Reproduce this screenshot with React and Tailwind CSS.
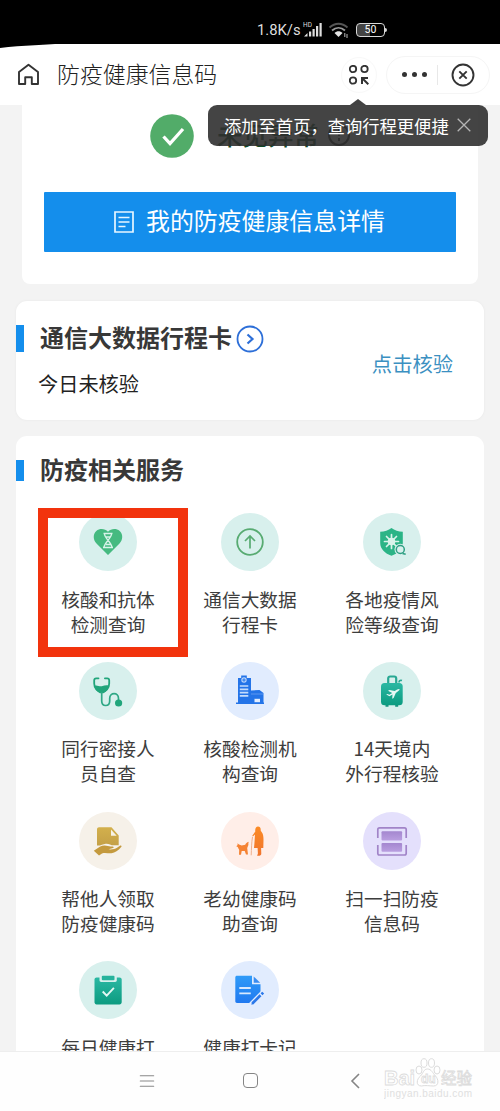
import { Menu } from "lucide-react";

function HeartIcon() {
  return (
    <>
      <path
        d="M29 42 17.500 30.500C14 27 13.800 21 17.300 18c3.400-2.900 8.700-2.600 11.700.8 3-3.400 8.300-3.700 11.700-.8 3.500 3 3.300 9-.2 12.500z"
        fill="#45ba80"
      />
      <path
        d="M24.500 20.500h9M25.500 21c0 4 6.500 8 7.500 13M32.500 21c0 4-6.500 8-7.500 13M24 34.500h10M27 24h4M27 31.500h5"
        stroke="#d9f3ea"
        strokeWidth="1.300"
        fill="none"
      />
    </>
  );
}

function ArrowUpIcon() {
  return (
    <g fill="none" stroke="#58ab72">
      <circle cx="29" cy="29" r="12.800" strokeWidth="1.800" />
      <path d="M29 35.500V23.500M24 28l5-5 5 5" strokeWidth="1.700" />
    </g>
  );
}

function ShieldIcon() {
  return (
    <>
      <path
        d="M28.500 15c3 2.500 7 3.500 11.300 3.700V30c0 6-5 10.500-11.300 12.800C22 40.500 17.200 36 17.200 30V18.700C21.500 18.500 25.500 17.500 28.500 15z"
        fill="#2bb486"
      />
      <circle cx="28.500" cy="28.500" r="3.800" fill="#d9f3ea" />
      <path
        d="M28.500 21.500v14M21.500 28.500h14M23.500 23.500l10 10M33.500 23.500l-10 10"
        stroke="#d9f3ea"
        strokeWidth="1.700"
        strokeLinecap="round"
      />
      <circle cx="37.300" cy="36.500" r="5.800" fill="#d8f0ed" />
      <circle cx="37.300" cy="36.500" r="4" fill="#d8f0ed" stroke="#2f9f83" strokeWidth="1.500" />
      <path d="m39.500 40.500 3.200.8" stroke="#2f9f83" strokeWidth="1.600" />
    </>
  );
}

function StethoscopeIcon() {
  return (
    <>
      <path
        d="M19.500 16.300h-2.300c-1.300 0-2 .8-2 2v3.200c0 4.500 3.200 8.500 7.500 8.500s7.500-4 7.500-8.500v-3.200c0-1.200-.7-2-2-2h-2.300"
        fill="none"
        stroke="#21a57b"
        strokeWidth="1.800"
        strokeLinecap="round"
      />
      <path d="M15.300 23.800c2.500-1.300 5 .9 7.500.4 2.500-.5 5-1.500 7.300-.4-.8 3.700-3.200 6.200-5.600 7.500h-3.600c-2.500-1.300-4.900-3.800-5.600-7.500z" fill="#21a57b" />
      <path
        d="M22.700 30v9c0 6 8 6 8 0v-2.500c0-6.500 8.800-6.500 8.800 0V40"
        fill="none"
        stroke="#2fa886"
        strokeWidth="1.700"
      />
      <circle cx="39.600" cy="41" r="3.600" fill="#21a57b" />
    </>
  );
}

function BuildingIcon() {
  return (
    <>
      <path
        d="M20.200 13.500h5.600V16H30v12.500l8.500-.5 4 3v9.500h.5V42H15v-1.500h2V16h3.200z"
        fill="#2474e8"
      />
      <circle cx="23" cy="18" r="2.700" fill="#b9d4fb" />
      <path d="M23 16.300v3.400M21.300 18h3.400" stroke="#2474e8" strokeWidth="1" />
      <path d="M18.800 24h8.500M18.800 27.300h8.500M18.800 30.600h8.500M18.800 33.900h8.500" stroke="#c5dcfc" strokeWidth="1.700" />
      <path d="M30 32h12" stroke="#75a8f2" strokeWidth=".7" />
      <path d="M33.500 36.800h5.500v3.400h-5.500z" fill="#e2edff" />
    </>
  );
}

function SuitcaseIcon() {
  return (
    <>
      <path d="M25.200 22v-5.500c0-1.200.8-2 2-2h4c1.200 0 2 .8 2 2V22" fill="none" stroke="#29a893" strokeWidth="2.200" />
      <rect x="18" y="21" width="21.700" height="22.300" rx="3.500" fill="url(#teal)" />
      <path d="M22.500 43h3v1.800h-3zM32.200 43h3v1.800h-3z" fill="#16957f" />
      <path d="M36 20.500c0-1.500 1-2.700 3-2" fill="none" stroke="#29a893" strokeWidth="1.700" />
      <path
        d="m23.200 32.500 1.200-.6 2 .8 2.800-1.800-4.200-2.200 1.500-.8 5.200 1.200 2.500-1.600c1-.6 2-.7 2.300-.2.300.5-.2 1.200-1.200 1.800L32.800 31l-2.200 5-1.400.8.300-4.300-3 1.800z"
        fill="#e8f8f4"
      />
    </>
  );
}

function HandDocIcon() {
  return (
    <>
      <path d="M20 15.200h12.500l7.200 8.300v9.800h-5c-3 0-5-2-8-1.600-3 .3-4.700 2.100-8.700 1.900V17.200c0-1.100.9-2 2-2z" fill="url(#gold)" />
      <path d="M32 17.500v6.300h5.700z" fill="#f7f2e6" />
      <path
        d="m14.800 38.800 6-4c2.500-1.400 5.500-1.700 8-.7 1.300.5 3.500.3 4.800.3 1.200 0 1.500 1.300.4 1.700l-4.500 1.200c3 .4 6.500-.2 8.500-1.600l3-2c1.300-.7 2.100.3 1.200 1.300-3 3.600-6.200 5.700-9.700 6.200-3.500.3-6.500-1-9.500.2L20 43.500z"
        fill="#c49a3e"
      />
    </>
  );
}

function ElderIcon() {
  return (
    <>
      <path
        d="M37 14.500c1.700 0 2.800 1.200 2.700 3-.1.900 0 1.500.8 2.200 1.800 2.300 2 5 2 8.300l-.2 8h-2.200l.2 5.800c0 1-.8 1.900-2 1.900h-2.200l.8-2.300-.3-5.400H33c.6-5 .7-9.800 1-13.500l-2.200 2-.5-.7 3-4.200c-.5-3 .8-5.100 2.700-5.100z"
        fill="url(#orange)"
      />
      <path d="M31.500 25c-1 5.500-1 12-1.300 18.300" stroke="#f0b08d" strokeWidth="1" fill="none" />
      <path
        d="m16.500 31.200 1.500 1.300 2.700 1 3.500-.7c.7-1.200 1.500-2.600 3.500-3-.3 1-.5 2-.3 3.300l-1.200 3 .8 6.300h-2l-1.300-3.500-3 .2-.7 3.600h-2l.2-4.700-1.500-2.900-1.400-.9 1.300-1.200z"
        fill="#f58334"
      />
    </>
  );
}

function ScanIcon() {
  return (
    <>
      <path
        d="M14.800 26V17.500c0-1 .7-1.700 1.700-1.700h25c1 0 1.700.7 1.700 1.700V26M14.800 33v8.300c0 1 .7 1.700 1.700 1.700h25c1 0 1.700-.7 1.700-1.700V33"
        fill="none"
        stroke="#a184c8"
        strokeWidth="1.700"
      />
      <rect x="18.500" y="19.300" width="20.600" height="9.200" rx="1" fill="url(#purple)" />
      <rect x="18.500" y="31" width="20.600" height="8.800" rx="1" fill="url(#purple)" />
    </>
  );
}

function ClipboardIcon() {
  return (
    <>
      <path d="M17.500 16.500h23c1.200 0 2.200.9 2.200 2v22.800c0 1.200-1 2.100-2.200 2.100h-23c-1.100 0-2-.9-2-2.100V18.500c0-1.100.9-2 2-2z" fill="url(#teal)" />
      <path d="M20.500 14.500h17.300v4.800c0 1-.7 1.700-1.700 1.700H22.200c-1 0-1.700-.7-1.700-1.700z" fill="#d8f0ed" />
      <rect x="22.800" y="14.700" width="12.700" height="4.600" rx="1" fill="#26b39c" />
      <path d="m23.700 30.500 4 4.200 7.200-7.800" fill="none" stroke="#e5f7f3" strokeWidth="1.900" />
    </>
  );
}

function EditDocIcon() {
  return (
    <>
      <path d="M16 14.700h15v8.600h8.500v8L30 42H16c-1 0-1.700-.7-1.700-1.700V16.400c0-1 .7-1.700 1.700-1.700z" fill="url(#blue)" />
      <path d="M32.700 15.500v6.200h6.500z" fill="#3a8df0" />
      <path d="M18.300 27h11.500M18.300 32.300h11.500" stroke="#d8e9ff" strokeWidth="1.800" />
      <path d="M30.300 43.700 43.500 30.500" stroke="#e2edff" strokeWidth="5.500" />
      <path d="m31.500 42.300 8-8M40.500 33.300l1.700-1.700" stroke="#2b78ea" strokeWidth="2.700" />
      <path d="m30.400 43.700.5-3 2.300 2.200z" fill="#2b78ea" />
    </>
  );
}

const services = [
  { lines: ["核酸和抗体", "检测查询"], bg: "bg-[#d8f0ed]", Icon: HeartIcon, marked: true },
  { lines: ["通信大数据", "行程卡"], bg: "bg-[#d8f0ed]", Icon: ArrowUpIcon },
  { lines: ["各地疫情风", "险等级查询"], bg: "bg-[#d8f0ed]", Icon: ShieldIcon },
  { lines: ["同行密接人", "员自查"], bg: "bg-[#d8f0ed]", Icon: StethoscopeIcon },
  { lines: ["核酸检测机", "构查询"], bg: "bg-[#e1ecfe]", Icon: BuildingIcon },
  { lines: ["14天境内", "外行程核验"], bg: "bg-[#d8f0ed]", Icon: SuitcaseIcon },
  { lines: ["帮他人领取", "防疫健康码"], bg: "bg-[#f6f1e9]", Icon: HandDocIcon },
  { lines: ["老幼健康码", "助查询"], bg: "bg-[#ffeee8]", Icon: ElderIcon },
  { lines: ["扫一扫防疫", "信息码"], bg: "bg-[#e4e0fc]", Icon: ScanIcon },
  { lines: ["每日健康打"], bg: "bg-[#d8f0ed]", Icon: ClipboardIcon },
  { lines: ["健康打卡记"], bg: "bg-[#e1ecfe]", Icon: EditDocIcon },
];

// Shared gradients used by the service icons
function Gradients() {
  const stops = [
    ["teal", "#2bb8a3", "#0c9b80"],
    ["gold", "#d3b04c", "#c4a047"],
    ["orange", "#fb8b25", "#f0742d"],
    ["purple", "#a487cf", "#b99ee0"],
    ["blue", "#2f9bf8", "#2079f0"],
  ];
  return (
    <svg className="absolute h-0 w-0">
      <defs>
        {stops.map(([id, from, to]) => (
          <linearGradient key={id} id={id} x1="0" y1="0" x2="0" y2="1">
            <stop offset="0" stopColor={from} />
            <stop offset="1" stopColor={to} />
          </linearGradient>
        ))}
      </defs>
    </svg>
  );
}

function StatusBar() {
  return (
    <div className="relative z-10 flex h-11 shrink-0 items-start bg-black pl-[257px] pt-5 text-[#dedede]">
      <span className="w-[45px] font-[Roboto,sans-serif] text-[14.800px] leading-5">1.8K/s</span>
      <svg className="h-5 w-[24px]" viewBox="0 0 24 20">
        <text x="1" y="7" fontSize="6.500" fontFamily="Roboto, sans-serif" fill="#dedede">HD</text>
        <path d="M2 16.500 5.500 13v3.500zM7 11.500h2.200v5H7zM10.500 9h2.200v7.500h-2.200zM14 6h2.200v10.500H14zM17.500 3h2.200v13.500h-2.200z" fill="#dedede" />
      </svg>
      <svg className="h-5 w-[30px]" viewBox="0 0 30 20" fill="none">
        <path d="M3.500 7.500c5.500-5 12.500-5 18 0" stroke="#555" strokeWidth="1.800" />
        <path d="M6 10.500c4-3.600 9-3.600 13 0" stroke="#999" strokeWidth="1.800" />
        <path d="M8.500 13c2.500-2.200 5.500-2.200 8 0l-4 4z" fill="#e5e5e5" />
        <path d="M18.800 13v4M21 14v4" stroke="#bbb" strokeWidth="1" />
      </svg>
      <div className="mt-[3px] flex h-[14px] w-[29px] items-center justify-center rounded-[4px] border-[1.500px] border-[#d8d8d8] bg-gradient-to-r from-[#444] from-50% to-black to-50% font-[Roboto,sans-serif] text-[10.500px] leading-none text-white">
        50
      </div>
      <div className="mt-[8px] h-1 w-[2px] rounded-r bg-[#d8d8d8]" />
      <svg className="absolute left-0 top-[43px] h-[6px] w-[66px] blur-[0.6px]" viewBox="0 0 66 6">
        <path d="M0 0h66C48 2 22 2 0 5z" fill="#000" />
      </svg>
    </div>
  );
}

function Tooltip() {
  return (
    <div className="absolute left-[208px] top-[61px] z-10 flex h-[41px] w-[280px] items-center rounded-[9px] bg-[#303030]/90 pl-4 text-[17.300px] text-white">
      <div className="absolute -top-[6px] left-[142px] border-x-[8px] border-b-[6px] border-x-transparent border-b-[#424242]" />
      <span className="whitespace-nowrap">添加至首页，查询行程更便捷</span>
      <svg className="ml-[8px] mt-[-1px] h-[14px] w-[14px] shrink-0" viewBox="0 0 14 14">
        <path d="m.7.7 12.600 12.600M13.300.7.7 13.300" stroke="#b5b5b5" strokeWidth="1.300" />
      </svg>
    </div>
  );
}

function Header() {
  return (
    <header className="relative flex h-[61px] shrink-0 items-center bg-white pl-[17px]">
      <svg className="h-[23px] w-[23px]" viewBox="0 0 23 23" fill="none" stroke="#333" strokeWidth="1.900" strokeLinejoin="round">
        <path d="M2 9 11.500 1.800 21 9v12h-6.200v-6.800H8.200V21H2z" />
      </svg>
      <h1 className="-mt-[3px] ml-[17px] w-[284px] whitespace-nowrap text-[22.900px] font-light leading-none text-[#222]">
        防疫健康信息码
      </h1>
      <div className="flex h-[36px] w-[36px] items-center justify-center rounded-full border border-[#f8f8f8]">
        <svg className="h-5 w-5" viewBox="0 0 20 20" fill="none" stroke="#333" strokeWidth="1.800">
          <circle cx="4" cy="4" r="3.200" />
          <circle cx="15.500" cy="4" r="3.200" />
          <circle cx="4" cy="15.500" r="3.200" />
          <path d="M13 19v-6h6M13.300 13.300l6 6" strokeWidth="2" />
        </svg>
      </div>
      <div className="ml-[9px] flex h-[38px] w-[104px] items-center rounded-full border border-[#f5f5f5] pl-[15px]">
        <div className="flex w-[35px] gap-[5px]">
          <i className="h-[5px] w-[5px] rounded-full bg-[#333]" />
          <i className="h-[5px] w-[5px] rounded-full bg-[#333]" />
          <i className="h-[5px] w-[5px] rounded-full bg-[#333]" />
        </div>
        <div className="h-5 w-px bg-[#e8e8e8]" />
        <svg className="ml-[13px] h-6 w-6" viewBox="0 0 24 24" fill="none" stroke="#333" strokeWidth="1.900">
          <circle cx="12" cy="12" r="10.500" />
          <path d="m8.300 8.300 7.400 7.400M15.700 8.300l-7.400 7.400" />
        </svg>
      </div>
      <Tooltip />
    </header>
  );
}

function HealthCard() {
  return (
    <section className="mx-[22px] flex h-[179px] shrink-0 flex-col rounded-b-[8px] bg-white px-[22px] pt-[9px]">
      <div className="flex h-[44px] items-center pl-[106px]">
        <svg className="h-11 w-11" viewBox="0 0 44 44">
          <circle cx="22" cy="22" r="21.800" fill="#52ac69" />
          <path d="m13.500 22.500 6.500 7 13-14.500" fill="none" stroke="#fff" strokeWidth="3.300" />
        </svg>
        <span className="-mt-[5px] ml-[23px] text-[25.500px] font-medium leading-none text-[#0f4a26]">未见异常</span>
        <svg className="-mt-[2px] ml-[9px] h-[22px] w-[22px]" viewBox="0 0 22 22" fill="none" stroke="#222" strokeWidth="2">
          <circle cx="11" cy="11" r="10" />
          <path d="M11 5v7M11 14v3" />
        </svg>
      </div>
      <button className="mt-[34px] flex h-[60px] items-center rounded-[1px] bg-[#148eec] pl-[70px] text-[23.900px] leading-none text-white">
        <svg className="h-[22px] w-5" viewBox="0 0 20 22" fill="none" stroke="#e8f6ff" strokeWidth="1.700">
          <path d="M1 1h18v20H1zM4.500 6.500h11M4.500 11h11M4.500 15.500h7" />
        </svg>
        <span className="-mt-[4px] ml-[12px] whitespace-nowrap">我的防疫健康信息详情</span>
      </button>
    </section>
  );
}

function TravelCard() {
  return (
    <section className="mx-4 mt-[17px] flex h-[119px] shrink-0 rounded-[11px] bg-white shadow-[0_0_3px_rgba(0,0,0,0.05)]">
      <div className="mt-[24px] h-[27px] w-2 bg-[#148eec]" />
      <div className="flex-1">
        <div className="ml-4 mt-[23px] flex h-[28px] items-center">
          <h2 className="-mt-[3px] whitespace-nowrap text-2xl font-bold leading-none text-[#383838]">通信大数据行程卡</h2>
          <svg className="ml-[4px] mt-[2px] h-7 w-7" viewBox="0 0 28 28" fill="none" stroke="#2d6fd8">
            <circle cx="14" cy="14" r="12.500" strokeWidth="1.800" />
            <path d="m11.500 9.500 5 4.500-5 4.500" strokeWidth="2.200" />
          </svg>
        </div>
        <p className="ml-[14px] mt-[22px] text-[20.200px] leading-none text-[#222]">今日未核验</p>
      </div>
      <a className="mr-[31px] mt-[52px] text-[20.300px] leading-none text-[#3b90c1]">点击核验</a>
    </section>
  );
}

function Service({ lines, bg, Icon, marked }) {
  return (
    <div className="relative flex h-[149.500px] flex-col items-center">
      <div className={`h-[58px] w-[58px] rounded-full ${bg}`}>
        <svg className="h-[58px] w-[58px]" viewBox="0 0 58 58">
          <Icon />
        </svg>
      </div>
      <p className="mt-[15px] whitespace-nowrap text-center text-[18.700px] leading-[25.300px] text-[#3d3d3d]">
        {lines[0]}
        <br />
        {lines[1]}
      </p>
      {marked && (
        <div className="absolute -top-[5px] left-[1px] h-[149px] w-[150px] border-[10px] border-[#f2330d]" />
      )}
    </div>
  );
}

function ServicesCard() {
  return (
    <section className="mx-4 mt-4 h-[615px] min-h-0 shrink overflow-hidden rounded-t-[11px] bg-white">
      <div className="mt-[20px] flex h-[28px] items-center">
        <div className="mt-[1px] h-[21px] w-2 bg-[#148eec]" />
        <h2 className="-mt-[3px] ml-4 text-2xl font-bold leading-none text-[#383838]">防疫相关服务</h2>
      </div>
      <div className="ml-[21px] mt-[28.500px] grid w-[426px] grid-cols-3">
        {services.map((item) => (
          <Service key={item.lines[0]} {...item} />
        ))}
      </div>
    </section>
  );
}

function Watermark() {
  return (
    <div className="ml-[24px] mt-[5px] w-[92px]">
      <svg className="h-[46px] w-[92px]" viewBox="0 0 92 46" fill="#fff" stroke="#dcdcdc" strokeWidth="1">
        <text x="0" y="28" fontSize="20" fontWeight="700" fontFamily="Liberation Sans, sans-serif" strokeWidth=".8" textLength="31">Bai</text>
        <ellipse cx="35" cy="13" rx="3" ry="4" />
        <ellipse cx="40" cy="6" rx="3" ry="4.300" />
        <ellipse cx="47.500" cy="6" rx="3" ry="4.300" />
        <ellipse cx="53" cy="13" rx="3" ry="4" />
        <path d="M43.500 12c4 0 5 4 8 7 3 3 4 10-2 10-3 0-9-1-12 0-6 0-5-7-1-10 3-3 3-7 7-7z" />
        <text x="37" y="26" fontSize="12" fontWeight="700" fontFamily="Liberation Sans, sans-serif" strokeWidth=".8">du</text>
        <text x="57" y="27" fontSize="15.500" fontWeight="400" fontFamily="Noto Sans CJK SC, sans-serif" strokeWidth=".8">经验</text>
        <text x="0" y="40" fontSize="10" fontFamily="Liberation Sans, sans-serif" fill="#e0e0e0" stroke="none" textLength="88">jingyan.baidu.com</text>
      </svg>
    </div>
  );
}

function NavBar() {
  return (
    <nav className="flex h-[60px] shrink-0 items-start border-t border-[#eee] bg-[#fefefe] pl-[137.500px]">
      <Menu className="mt-[20px] h-[18px] w-[18px] scale-x-110 text-[#888]" strokeWidth={1.600} />
      <div className="ml-[87px] mt-[21px] h-[15px] w-[15px] rounded-[4px] border-[1.500px] border-[#858585]" />
      <svg className="ml-[92px] mt-[21px] h-4 w-[10px]" viewBox="0 0 10 16" fill="none" stroke="#858585" strokeWidth="1.600">
        <path d="M9 1 2 8l7 7" />
      </svg>
      <Watermark />
    </nav>
  );
}

export default function App() {
  return (
    <div className="flex h-[1111px] w-[500px] flex-col overflow-hidden bg-[#f3f3f3] font-['Noto_Sans_CJK_SC',sans-serif]">
      <Gradients />
      <StatusBar />
      <Header />
      <main className="flex h-[946px] shrink-0 flex-col overflow-hidden">
        <HealthCard />
        <TravelCard />
        <ServicesCard />
      </main>
      <NavBar />
    </div>
  );
}
